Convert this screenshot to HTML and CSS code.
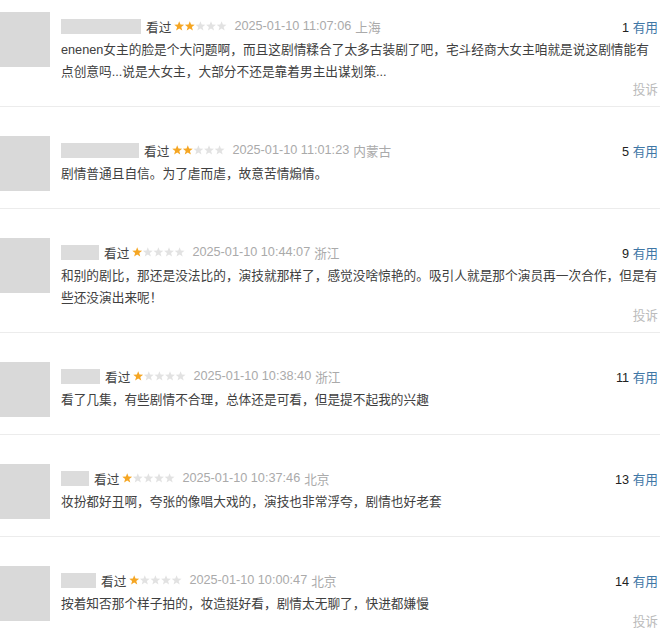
FILE: index.html
```html
<!DOCTYPE html>
<html lang="zh-CN">
<head>
  <meta charset="UTF-8">
  <meta name="viewport" content="width=device-width, initial-scale=1.0">
  <title>短评</title>
  <link rel="stylesheet" href="styles.css">
</head>
<body>
  <div id="comment-list"></div>

  <script>
    const $ = (selector) => document.querySelector(selector);

    // 短评数据（用户名打码，只保留长度）
    const comments = [
      { nameWidth: 80, rating: 2, time: '2025-01-10 11:07:06', loc: '上海', votes: 1, report: true,
        text: 'enenen女主的脸是个大问题啊，而且这剧情糅合了太多古装剧了吧，宅斗经商大女主咱就是说这剧情能有点创意吗...说是大女主，大部分不还是靠着男主出谋划策...' },
      { nameWidth: 78, rating: 2, time: '2025-01-10 11:01:23', loc: '内蒙古', votes: 5, report: false,
        text: '剧情普通且自信。为了虐而虐，故意苦情煽情。' },
      { nameWidth: 38, rating: 1, time: '2025-01-10 10:44:07', loc: '浙江', votes: 9, report: true,
        text: '和别的剧比，那还是没法比的，演技就那样了，感觉没啥惊艳的。吸引人就是那个演员再一次合作，但是有些还没演出来呢！' },
      { nameWidth: 39, rating: 1, time: '2025-01-10 10:38:40', loc: '浙江', votes: 11, report: false,
        text: '看了几集，有些剧情不合理，总体还是可看，但是提不起我的兴趣' },
      { nameWidth: 28, rating: 1, time: '2025-01-10 10:37:46', loc: '北京', votes: 13, report: false,
        text: '妆扮都好丑啊，夸张的像唱大戏的，演技也非常浮夸，剧情也好老套' },
      { nameWidth: 35, rating: 1, time: '2025-01-10 10:00:47', loc: '北京', votes: 14, report: true,
        text: '按着知否那个样子拍的，妆造挺好看，剧情太无聊了，快进都嫌慢' }
    ];

    // 一颗星的轮廓，10x10 左右
    const STAR = '5.2,0.2 6.49,3.62 10.15,3.79 7.29,6.08 8.26,9.61 5.2,7.6 2.14,9.61 3.11,6.08 0.25,3.79 3.91,3.62';

    const renderStars = (rating) => {
      const stars = [0, 1, 2, 3, 4].map(i => `
        <polygon points="${STAR}" transform="translate(${i * 10.6} 0)" class="${i < rating ? 'star-on' : 'star-off'}"/>`).join('');
      return `<svg class="stars" width="53" height="11" viewBox="0 0 53 11">${stars}</svg>`;
    };

    const renderComment = (c) => `
      <div class="comment">
        <div class="avatar"></div>
        <div class="comment-body">
          <div class="comment-head">
            <span class="user-name" style="width: ${c.nameWidth}px"></span>
            <span class="watched">看过</span>
            ${renderStars(c.rating)}
            <span class="comment-time">${c.time}</span>
            <span class="comment-loc">${c.loc}</span>
            <span class="votes"><span class="vote-count">${c.votes}</span> <span class="vote-label">有用</span></span>
          </div>
          <p class="comment-text">${c.text}</p>
          <div class="report ${c.report ? '' : 'hidden'}">投诉</div>
        </div>
      </div>
    `;

    $('#comment-list').innerHTML = comments.map(renderComment).join('');
  </script>
</body>
</html>
```

FILE: styles.css
```css
body { margin: 0; background: #fff; color: #404040; font-family: "Liberation Sans", "Noto Sans CJK SC", sans-serif; font-size: 12.7px; }
#comment-list { width: 660px; }
.comment { display: flex; padding: 29px 0 7px; border-bottom: 1px solid #ececec; }
.comment:first-child { padding-top: 12px; }
.avatar { flex: 0 0 50px; height: 55px; margin-right: 11px; background: #d9d9d9; }
.comment-body { flex: 1; min-width: 0; }
.comment-head { display: flex; align-items: center; height: 20px; padding-top: 4px; white-space: nowrap; }
.user-name { height: 15px; margin-right: 5px; background: #dcdcdc; }
.watched { color: #444; }
.stars { margin: 0 7px 0 3px; }
.star-on { fill: #f5a623; }
.star-off { fill: #e2e2e2; }
.comment-time, .comment-loc { color: #aaa; }
.comment-loc { margin-left: 4px; }
.votes { margin-left: auto; padding-right: 2px; }
.vote-count { color: #222; }
.vote-label { color: #3f77a6; }
.comment-text { margin: 3px 0 0; line-height: 22px; }
.report { margin-top: -2px; padding-right: 2px; line-height: 18px; text-align: right; color: #bbb; }
.report.hidden { visibility: hidden; }
```
